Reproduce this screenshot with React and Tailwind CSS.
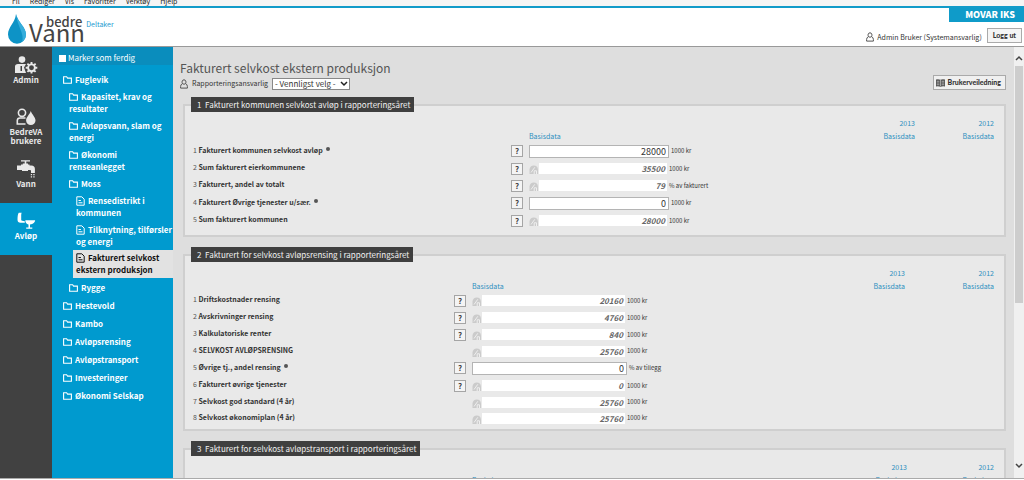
import React from "react";

const menuItems = ["Fil", "Rediger", "Vis", "Favoritter", "Verktøy", "Hjelp"];

function FolderIcon() {
  return (
    <svg viewBox="0 0 9 8" className="mr-[3px] inline-block h-2 w-[9px] align-[-1px]" fill="none" stroke="currentColor" strokeWidth="1.1" aria-hidden="true">
      <path d="M.6 7.300V.7h3l1 1.400h3.800v5.200z" />
    </svg>
  );
}

function PageIcon() {
  return (
    <svg viewBox="0 0 9 10" className="mr-[3px] inline-block h-[10px] w-[9px] align-[-2px]" fill="none" stroke="currentColor" strokeWidth="1" aria-hidden="true">
      <path d="M.8.8h5l2.400 2.400v6H.8zM2.500 4.500h2.400M2.500 6.800h4" />
    </svg>
  );
}

function PersonIcon() {
  return (
    <svg viewBox="0 0 8 10" className="h-[10px] w-2 shrink-0" fill="none" stroke="#555" strokeWidth="1" aria-hidden="true">
      <path d="M2.500 4.600C1.500 3 2.200.8 4 .8s2.500 2.200 1.500 3.800M2.500 4.600Q.6 5.400.6 7.500v1.600h6.800V7.500q0-2.100-1.900-2.900M2.500 4.600q1.500 1.400 3 0" />
    </svg>
  );
}

function AdminIcon() {
  return (
    <svg viewBox="0 0 24 18" className="h-[18px] w-6" fill="currentColor" aria-hidden="true">
      <circle cx="8" cy="3.600" r="3.300" />
      <path fillRule="evenodd" d="M1 17V10.500Q1 8 4 8h8l-2 3.500 2 5.500zM6.500 10v5h1.500v-5z" />
      <circle cx="17.500" cy="11.800" r="3.400" fill="none" stroke="currentColor" strokeWidth="1.900" />
      <path stroke="currentColor" strokeWidth="1.900" fill="none" d="M17.500 6v2.200M17.500 15.400v2.200M11.700 11.800h2.200M21.100 11.800h2.200M13.400 7.700l1.600 1.600M20 14.300l1.600 1.600M13.400 15.900l1.600-1.600M20 9.300l1.600-1.600" />
    </svg>
  );
}

function UsersIcon() {
  return (
    <svg viewBox="0 0 20 18" className="h-[18px] w-5" aria-hidden="true">
      <circle cx="6" cy="4.800" r="3.600" fill="none" stroke="currentColor" strokeWidth="1.600" />
      <path fill="none" stroke="currentColor" strokeWidth="1.600" d="M9.500 16H1.300v-3.400q0-2.600 2.700-2.600h5.500" />
      <path fill="currentColor" d="M14.800 3c1 3.500 4.700 6 4.700 9.500a4.700 4.600 0 0 1-9.400 0C10.100 9 13.800 6.500 14.800 3z" />
    </svg>
  );
}

function TapIcon() {
  return (
    <svg viewBox="0 0 20 20" className="h-5 w-5" fill="currentColor" aria-hidden="true">
      <path d="M5 1.200h9v1.400h-3.700v2H12v.9h1.500v1h1.800q3.600 0 3.600 3.600V14h-3.900v-2.300q0-.8-1-.8h-2V12H6v-1.100H1V6.500h4v-1h1.800v-.9h1.900v-2H5z" />
      <path d="M14.800 15h1.300v1.200h-1.300zM17.300 15h1.300v1.200h-1.300zM14.800 17.300h1.300v1.200h-1.300zM17.300 17.300h1.300v1.200h-1.300z" />
    </svg>
  );
}

function ToiletIcon() {
  return (
    <svg viewBox="0 0 20 18" className="h-[18px] w-5" fill="currentColor" aria-hidden="true">
      <path d="M2.800.8H5.700Q5.200 1.500 5.200 3v4.800q0 .8 1 1l2.600.4v1.500H4.600Q1.500 10.700 1.500 7.500 1.500 2.500 2.800.8z" />
      <path d="M9.300 8.300h9.900q-.3 3.400-5.200 4.200v2.900h2.300v1.400H10.200v-1.400h2.300v-2.800Q9.300 11.800 9.300 8.300z" />
    </svg>
  );
}

function BookIcon() {
  return (
    <svg viewBox="0 0 9 8" className="h-2 w-[9px] shrink-0" aria-hidden="true">
      <path fill="#555" d="M0 .5Q2.500 0 4.300.7 6.500 0 9 .5v7Q6.500 7 4.500 7.800 2.500 7 0 7.500z" />
      <path stroke="#d8d8d8" strokeWidth=".6" d="M.8 2.300h2.600M.8 4h2.600M.8 5.700h2.600M5.600 2.300h2.600M5.600 4h2.600M5.600 5.700h2.600M4.500 1v6" />
    </svg>
  );
}

function LockIcon() {
  return (
    <svg viewBox="0 0 10 9" className="h-[9px] w-[10px]" aria-hidden="true">
      <path fill="#cbcbcb" d="M.5 9V4.500Q1 .6 4.800.6T9 4.500V9z" />
      <path stroke="#efefef" strokeWidth="1" fill="none" d="M2 7.500 5.800 2.300M5.200 9V5.800h2.300V9" />
    </svg>
  );
}

const railItems = [
  { lines: ["Admin"], Icon: AdminIcon },
  { lines: ["BedreVA", "brukere"], Icon: UsersIcon },
  { lines: ["Vann"], Icon: TapIcon },
  { lines: ["Avløp"], Icon: ToiletIcon, active: true },
];

const tree = [
  {
    label: "Fuglevik",
    children: [
      { label: "Kapasitet, krav og resultater" },
      { label: "Avløpsvann, slam og energi" },
      { label: "Økonomi renseanlegget" },
      {
        label: "Moss",
        children: [
          { label: "Rensedistrikt i kommunen" },
          { label: "Tilknytning, tilførsler og energi" },
          { label: "Fakturert selvkost ekstern produksjon", active: true },
        ],
      },
      { label: "Rygge" },
    ],
  },
  { label: "Hestevold" },
  { label: "Kambo" },
  { label: "Avløpsrensing" },
  { label: "Avløpstransport" },
  { label: "Investeringer" },
  { label: "Økonomi Selskap" },
];

const sections = [
  {
    title: "1  Fakturert kommunen selvkost avløp i rapporteringsåret",
    labelCol: "w-[318px]",
    fieldCol: "w-[140px]",
    yearCol: "w-[83px]",
    pad: "pb-[6px]",
    rows: [
      { label: "Fakturert kommunen selvkost avløp", dot: true, help: true, value: "28000", unit: "1000 kr", edit: true },
      { label: "Sum fakturert eierkommunene", help: true, value: "35500", unit: "1000 kr" },
      { label: "Fakturert, andel av totalt", help: true, value: "79", unit: "% av fakturert" },
      { label: "Fakturert Øvrige tjenester u/sær.", dot: true, help: true, value: "0", unit: "1000 kr", edit: true },
      { label: "Sum fakturert kommunen", help: true, value: "28000", unit: "1000 kr" },
    ],
  },
  {
    title: "2  Fakturert for selvkost avløpsrensing i rapporteringsåret",
    labelCol: "w-[261px]",
    fieldCol: "w-[155px]",
    yearCol: "w-[93px]",
    pad: "pb-[3px]",
    rows: [
      { label: "Driftskostnader rensing", help: true, value: "20160", unit: "1000 kr" },
      { label: "Avskrivninger rensing", help: true, value: "4760", unit: "1000 kr" },
      { label: "Kalkulatoriske renter", help: true, value: "840", unit: "1000 kr" },
      { label: "SELVKOST AVLØPSRENSING", value: "25760", unit: "1000 kr" },
      { label: "Øvrige tj., andel rensing", dot: true, help: true, value: "0", unit: "% av tillegg", edit: true },
      { label: "Fakturert øvrige tjenester", help: true, value: "0", unit: "1000 kr" },
      { label: "Selvkost god standard (4 år)", value: "25760", unit: "1000 kr" },
      { label: "Selvkost økonomiplan (4 år)", value: "25760", unit: "1000 kr" },
    ],
  },
  {
    title: "3  Fakturert for selvkost avløpstransport i rapporteringsåret",
    labelCol: "w-[261px]",
    fieldCol: "w-[155px]",
    yearCol: "w-[91px]",
    pad: "pb-[3px]",
    rows: [],
  },
];

function TreeItem({ item, level }) {
  const Icon = level === 2 ? PageIcon : FolderIcon;
  const indent = level === 0 ? "pl-[11px]" : level === 1 ? "pl-[17px]" : "pl-6";
  return (
    <li className={level === 0 && item.children ? "pb-px" : ""}>
      {item.active ? (
        <div className="-mt-[3px] mb-1 pl-[21px]">
          <a href="#" aria-current="page" className="block bg-[#e2e2e2] py-[2px] pl-[3px] text-[#111]">
            <Icon />
            {item.label}
          </a>
        </div>
      ) : (
        <a href="#" className={`block ${indent} ${level === 0 && !item.children ? "pb-[6px]" : "pb-[5px]"}`}>
          <Icon />
          {item.label}
        </a>
      )}
      {item.children && (
        <ul>
          {item.children.map((c) => (
            <TreeItem key={c.label} item={c} level={level + 1} />
          ))}
        </ul>
      )}
    </li>
  );
}

function Row({ row, n, id }) {
  const height = row.edit ? "h-[18px]" : row.help ? "h-[17px]" : "h-4";
  return (
    <tr className={height}>
      <th scope="row" className="p-0 pb-[3px] text-left align-middle text-[7px] leading-[12px] font-bold whitespace-nowrap text-[#333]">
        <label htmlFor={id}>
          <span className="font-normal text-[#555]">{n} </span>
          {row.label}
        </label>
        {row.dot && <span className="ml-[3px] inline-block size-1 rounded-full bg-[#555] align-[2px]" />}
      </th>
      <td className="p-0 align-middle">
        {row.help && (
          <button type="button" aria-label={`Hjelp: ${row.label}`} className="block h-3 w-3 border border-[#a5a5a5] bg-[#f4f4f4] text-center text-[8px] leading-[10px] font-bold text-[#444]">
            ?
          </button>
        )}
      </td>
      <td className="p-0 align-middle">
        {row.edit ? (
          <input id={id} defaultValue={row.value} className="block h-[13px] w-full border border-[#b4b4b4] bg-white px-[2px] text-right text-[9px] leading-[11px] text-[#333]" />
        ) : (
          <div className="mr-[2px] flex h-[11px] bg-white">
            <span className="bg-[#e9e9e9] pt-[2px]">
              <LockIcon />
            </span>
            <output id={id} className="flex-1 pr-[2px] text-right text-[8px] leading-[11px] font-bold text-[#666] italic">
              {row.value}
            </output>
          </div>
        )}
      </td>
      <td className={`p-0 align-middle text-[6px] leading-[12px] whitespace-nowrap text-[#333] ${row.edit ? "pl-[2px]" : ""}`}>{row.unit}</td>
      <td />
      <td />
    </tr>
  );
}

function Section({ section, index }) {
  return (
    <fieldset className={`mb-[10px] min-w-0 border-2 border-[#cfcfcf] bg-[#e9e9e9] pr-[6px] pl-2 ${section.pad}`}>
      <legend className="-ml-[2px] bg-[#3f3f3f] pr-1 pl-[6px] text-[8px] leading-[15px] whitespace-pre text-[#f2f2f2]">{section.title}</legend>
      <table className="mt-[5px] w-full table-fixed">
        <colgroup>
          <col className={section.labelCol} />
          <col className="w-[18px]" />
          <col className={section.fieldCol} />
          <col />
          <col className="w-[80px]" />
          <col className={section.yearCol} />
        </colgroup>
        <thead className="text-[7px] leading-[12px] text-[#2b8fc0]">
          <tr>
            <td colSpan={4} />
            <th scope="col" className="p-0 text-right font-normal">2013</th>
            <th scope="col" className="p-0 pr-1 text-right font-normal">2012</th>
          </tr>
          <tr className="h-[13px]">
            <td colSpan={2} />
            <th scope="col" className="p-0 text-left align-middle font-normal">Basisdata</th>
            <td />
            <th scope="col" className="p-0 text-right align-middle font-normal">Basisdata</th>
            <th scope="col" className="p-0 pr-1 text-right align-middle font-normal">Basisdata</th>
          </tr>
        </thead>
        <tbody>
          {section.rows.map((row, i) => (
            <Row key={row.label} row={row} n={i + 1} id={`felt-${index}-${i}`} />
          ))}
        </tbody>
      </table>
    </fieldset>
  );
}

export default function App() {
  return (
    <div className="flex h-screen flex-col overflow-hidden bg-white pb-px font-['Noto_Sans_CJK_JP','Open_Sans',sans-serif] text-[#333]">
      <nav aria-label="Meny" className="flex h-[6px] shrink-0 items-end gap-[10px] overflow-hidden bg-[#f5f5f5] pl-3 text-[7px] leading-[10px] text-[#222]">
        {menuItems.map((m) => (
          <a key={m} href="#">{m}</a>
        ))}
      </nav>

      <header className="flex shrink-0 justify-between border-t-2 border-b border-t-[#129bc9] border-b-[#999] bg-white">
        <div className="flex h-[38px] items-start pl-2">
          <svg viewBox="0 0 18 30" className="mt-[6px] h-[30px] w-[18px]" aria-hidden="true">
            <path fill="#0d93c6" d="M8 0c1.500 8 10 13 10 20.500A9 9.300 0 0 1 0 20.500C0 13 7 9 8 0z" />
            <path fill="#35addb" d="M8 0c1.500 8 10 13 10 20.500 0 3-1.500 6-4 7.500C17 20 9 12 8 0z" />
          </svg>
          <div className="pl-[3px] text-[#444]">
            <div className="flex items-baseline gap-1 pt-[7px] pl-[17px] leading-[14px]">
              <span className="text-[13px] font-medium">bedre</span>
              <span className="text-[7px] text-[#1a9bd0]">Deltaker</span>
            </div>
            <div className="-mt-2 text-[24px] leading-[18px]">Vann</div>
          </div>
        </div>
        <div className="flex flex-col items-end">
          <div className="bg-[#0f9bc9] pr-[9px] pl-4 text-[9px] leading-[14px] font-black text-white">MOVAR IKS</div>
          <div className="flex items-center gap-[5px] pt-[5px] pr-[2px]">
            <div className="flex items-center gap-[3px] pt-1 text-[7px] leading-[12px]">
              <PersonIcon />
              <span>Admin Bruker (Systemansvarlig)</span>
            </div>
            <button type="button" className="h-[15px] border border-[#aaa] bg-[#f5f5f5] px-[5px] font-['Lato',sans-serif] text-[7px] leading-[13px] font-black">Logg ut</button>
          </div>
        </div>
      </header>

      <div className="flex min-h-0 flex-1 border-b border-[#aaa]">
        <nav aria-label="Moduler" className="flex w-[52px] shrink-0 flex-col bg-[#414141] text-[#e8e8e8]">
          {railItems.map(({ lines, Icon, active }) => (
            <a
              key={lines[0]}
              href="#"
              className={`flex h-[52px] flex-col items-center pt-[7px] text-center text-[8px] leading-[9px] font-bold ${active ? "bg-[#009acf] text-white" : ""}`}
            >
              <span className="flex h-[21px] items-center">
                <Icon />
              </span>
              <span>
                {lines.map((l) => (
                  <span key={l} className="block">{l}</span>
                ))}
              </span>
            </a>
          ))}
        </nav>

        <aside className="w-[121px] shrink-0 bg-[#009acf] text-white">
          <label className="flex h-[18px] items-center gap-[2px] bg-[#0a8dbd] pt-[6px] pb-[2px] pl-[7px] text-[8px] leading-[12px]">
            <input type="checkbox" className="size-[7px] appearance-none bg-white checked:bg-[#333]" />
            Marker som ferdig
          </label>
          <ul className="pt-[9px] text-[8px] leading-[12px] font-bold">
            {tree.map((item) => (
              <TreeItem key={item.label} item={item} level={0} />
            ))}
          </ul>
        </aside>

        <main className="min-w-0 flex-1 overflow-hidden bg-[#dedede] pt-3 pr-2">
          <div className="flex items-end justify-between pb-[7px]">
            <div className="pl-[7px]">
              <h1 className="text-[12px] leading-[18px] text-[#555]">Fakturert selvkost ekstern produksjon</h1>
              <div className="flex items-center text-[7px] leading-[13px]">
                <PersonIcon />
                <label htmlFor="ansvarlig" className="pr-1 pl-1">Rapporteringsansvarlig</label>
                <span className="relative">
                  <select id="ansvarlig" className="block h-3 w-[78px] appearance-none border border-[#888] bg-white pl-[2px] text-[8px] leading-[10px]">
                    <option>- Vennligst velg -</option>
                  </select>
                  <svg viewBox="0 0 8 6" className="pointer-events-none absolute top-[3px] right-[2px] h-[6px] w-2" fill="none" stroke="#222" strokeWidth="1.500" aria-hidden="true">
                    <path d="M1 1l3 3 3-3" />
                  </svg>
                </span>
              </div>
            </div>
            <button type="button" className="flex h-[15px] items-center gap-[3px] border border-[#aaa] bg-[#f0f0f0] pr-1 pl-[2px] font-['Lato',sans-serif] text-[7px] leading-[13px] font-black">
              <BookIcon />
              Brukerveiledning
            </button>
          </div>
          <div className="pl-[10px]">
            {sections.map((s, i) => (
              <Section key={s.title} section={s} index={i} />
            ))}
          </div>
        </main>

        <div className="flex w-[10px] shrink-0 flex-col items-center bg-[#f0f0f0]" aria-hidden="true">
          <svg viewBox="0 0 10 19" className="h-[19px] w-[10px] shrink-0" fill="none" stroke="#444" strokeWidth="1.500">
            <path d="M2 13l3-3 3 3" />
          </svg>
          <div className="w-[8px] basis-[55%] bg-[#cdcdcd]" />
          <div className="flex-1" />
          <svg viewBox="0 0 10 19" className="h-[19px] w-[10px] shrink-0" fill="none" stroke="#444" strokeWidth="1.500">
            <path d="M2 5l3 3 3-3" />
          </svg>
        </div>
      </div>
    </div>
  );
}
